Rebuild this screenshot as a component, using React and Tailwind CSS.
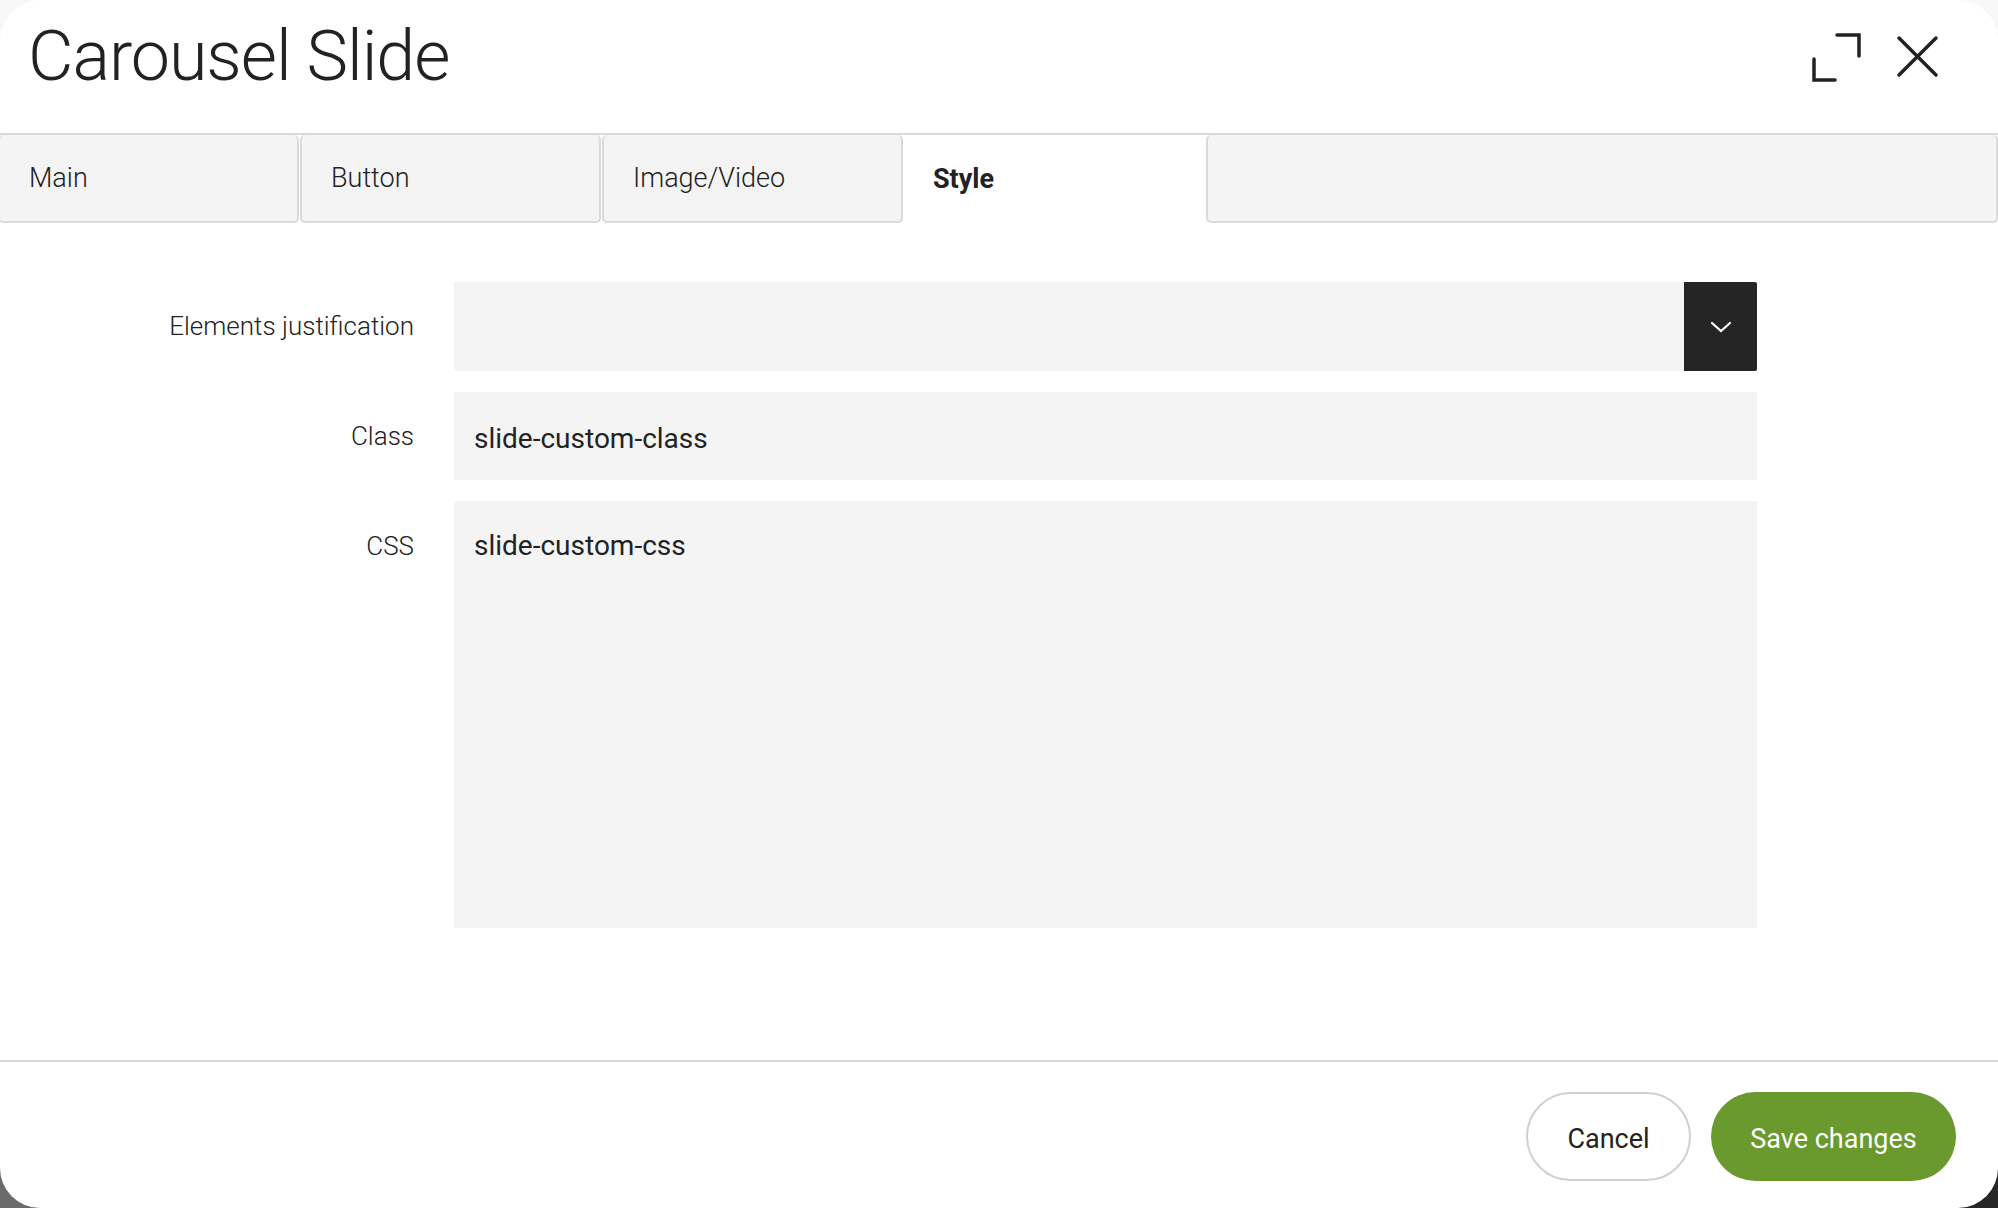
import React, { useState } from "react";

const tabs = ["Main", "Button", "Image/Video", "Style"];

function ExpandIcon() {
  return (
    <svg width="52" height="52" viewBox="0 0 52 52" fill="none" stroke="#222" strokeWidth="3.5" strokeLinecap="round" strokeLinejoin="miter">
      <path d="M27 4 H49 V25" />
      <path d="M4 28 V49 H25" />
    </svg>
  );
}

function CloseIcon() {
  return (
    <svg width="44" height="44" viewBox="0 0 44 44" fill="none" stroke="#222" strokeWidth="3.5" strokeLinecap="round">
      <path d="M3 4 L40 41" />
      <path d="M40 4 L3 41" />
    </svg>
  );
}

export default function App() {
  const [active, setActive] = useState("Style");

  return (
    <div className="h-[1208px] w-[1998px] bg-[linear-gradient(to_bottom,#f8f8f8_1160px,transparent_1160px),linear-gradient(to_right,#6b6b6b,#262626)] font-['Roboto',sans-serif] text-[#222]">
      <div className="flex h-full flex-col overflow-hidden rounded-[40px] bg-white">
        {/* Header */}
        <div className="flex h-[133px] shrink-0 items-start justify-between">
          <h1 className="pl-[28px] pt-[21px] text-[70px] font-light leading-none tracking-[-0.015em]">
            Carousel Slide
          </h1>
          <div className="flex items-start gap-[34px] pr-[58px] pt-[31px]">
            <button>
              <ExpandIcon />
            </button>
            <button className="mt-[3px]">
              <CloseIcon />
            </button>
          </div>
        </div>

        {/* Tabs */}
        <div className="flex h-[90px] shrink-0 border-t-2 border-[#dadada]">
          {tabs.map((tab, i) => (
            <button
              key={tab}
              onClick={() => setActive(tab)}
              className={
                "flex h-full items-center pl-[29px] text-[27px] " +
                (i === 0 ? "ml-[-2px] w-[301px] " : "ml-[1px] w-[301px] ") +
                (active === tab
                  ? "bg-white font-bold"
                  : "rounded-[5px] border-2 border-t-0 border-[#dadada] bg-[#f4f4f4] font-light")
              }
            >
              {tab}
            </button>
          ))}
          <div className="ml-[1px] flex-1 rounded-[5px] border-2 border-t-0 border-[#dadada] bg-[#f4f4f4]"></div>
        </div>

        {/* Form */}
        <div className="flex flex-1 flex-col gap-[21px] pt-[59px]">
          <div className="flex items-center">
            <label className="w-[414px] text-right text-[26px] font-light">Elements justification</label>
            <div className="ml-[40px] flex h-[89px] w-[1303px] bg-[#f4f4f4]">
              <div className="flex-1"></div>
              <div className="flex w-[73px] items-center justify-center rounded-r-[2px] bg-[#252525]">
                <svg width="22" height="12" viewBox="0 0 22 12" fill="none" stroke="#fff" strokeWidth="2.2" strokeLinecap="round">
                  <path d="M2 2 L11 10 L20 2" />
                </svg>
              </div>
            </div>
          </div>

          <div className="flex items-center">
            <label className="w-[414px] text-right text-[26px] font-light">Class</label>
            <input
              defaultValue="slide-custom-class"
              className="ml-[40px] h-[88px] w-[1303px] bg-[#f4f4f4] px-[20px] pt-[4px] text-[28px] text-[#222] outline-none"
            />
          </div>

          <div className="flex items-start">
            <label className="w-[414px] pt-[29px] text-right text-[26px] font-light leading-[32px]">CSS</label>
            <textarea
              defaultValue="slide-custom-css"
              className="ml-[40px] h-[427px] w-[1303px] resize-none bg-[#f4f4f4] px-[20px] pt-[29px] text-[28px] leading-[32px] text-[#222] outline-none"
            />
          </div>
        </div>

        {/* Footer */}
        <div className="flex shrink-0 justify-end gap-[20px] border-t-2 border-[#dadada] pb-[27px] pl-[40px] pr-[42px] pt-[30px]">
          <button className="h-[89px] w-[165px] rounded-full border-2 border-[#d0d0d0] bg-white pt-[6px] text-[27px]">
            Cancel
          </button>
          <button className="h-[89px] w-[245px] rounded-full bg-[#6a992e] pt-[6px] text-[27px] text-white">
            Save changes
          </button>
        </div>
      </div>
    </div>
  );
}
